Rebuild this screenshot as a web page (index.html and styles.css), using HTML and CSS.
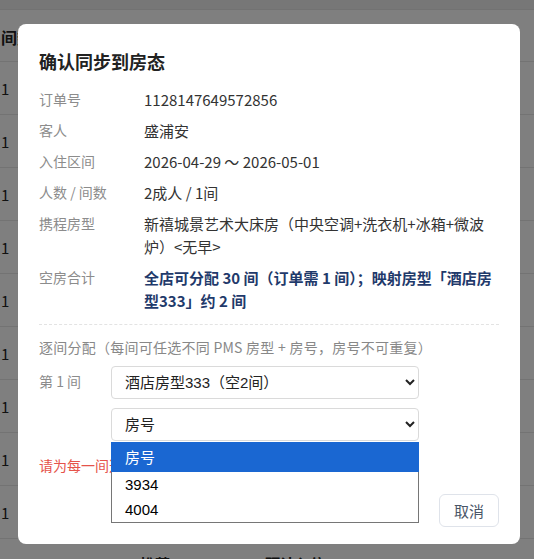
FILE: index.html
```html
<!DOCTYPE html>
<html lang="zh-CN">
<head>
<meta charset="utf-8">
<title>确认同步到房态</title>
<link rel="stylesheet" href="styles.css">
</head>
<body>
<div class="page">
  <div class="topbar"></div>
  <div class="table">
    <div class="trow thead"><span class="cell">间数</span></div>
    <div class="trow"><span class="cell">1</span></div>
    <div class="trow"><span class="cell">1</span></div>
    <div class="trow"><span class="cell">1</span></div>
    <div class="trow"><span class="cell">1</span></div>
    <div class="trow"><span class="cell">1</span></div>
    <div class="trow"><span class="cell">1</span></div>
    <div class="trow"><span class="cell">1</span></div>
    <div class="trow"><span class="cell">1</span></div>
    <div class="trow"><span class="cell">1</span></div>
    <div class="trow tfoot"><span class="cell c2">推荐</span><span class="cell c3">预计入住</span></div>
  </div>
</div>

<div class="overlay">
  <div class="modal">
    <h2 class="title">确认同步到房态</h2>
    <div class="info">
      <div class="label">订单号</div><div class="value">1128147649572856</div>
      <div class="label">客人</div><div class="value">盛浦安</div>
      <div class="label">入住区间</div><div class="value">2026-04-29 ～ 2026-05-01</div>
      <div class="label">人数 / 间数</div><div class="value">2成人 / 1间</div>
      <div class="label">携程房型</div><div class="value">新禧城景艺术大床房（中央空调+洗衣机+冰箱+微波炉）&lt;无早&gt;</div>
      <div class="label">空房合计</div><div class="value strong">全店可分配 30 间（订单需 1 间）；映射房型「酒店房型333」约 2 间</div>
    </div>
    <div class="divider"></div>
    <div class="hint">逐间分配（每间可任选不同 PMS 房型 + 房号，房号不可重复）</div>
    <div class="alloc">
      <div class="alloc-label">第 1 间</div>
      <div class="selects">
        <select class="sel">
          <option>酒店房型333（空2间）</option>
        </select>
        <div class="sel-wrap">
          <select class="sel">
            <option>房号</option>
            <option>3934</option>
            <option>4004</option>
          </select>
          <div class="dropdown">
            <div class="opt active">房号</div>
            <div class="opt">3934</div>
            <div class="opt">4004</div>
          </div>
        </div>
      </div>
    </div>
    <div class="error">请为每一间选择房号</div>
    <div class="footer">
      <button class="btn">取消</button>
    </div>
  </div>
</div>
</body>
</html>
```

FILE: styles.css
```css
html, body {
  margin: 0;
  padding: 0;
}
body {
  font-family: "Noto Sans CJK SC", "Noto Sans", sans-serif;
  background: #fff;
  color: #333;
  overflow: hidden;
  height: 559px;
}
.page {
  background: #fff;
}
.topbar {
  height: 9px;
  background: #eeeeee;
  border-bottom: 1px solid #e4e4e4;
}
.trow {
  height: 53px;
  border-bottom: 1px solid #e6e6e6;
  display: flex;
  align-items: center;
  padding-left: 1px;
  font-size: 15px;
  color: #222;
  box-sizing: border-box;
}
.thead {
  height: 52px;
  padding-top: 2px;
  font-weight: 700;
  font-size: 16px;
}
.tfoot {
  align-items: flex-start;
  padding-top: 14px;
  border-bottom: none;
}
.c2 { margin-left: 139px; font-weight: 700; }
.c3 { margin-left: 95px; font-weight: 700; }

.overlay {
  position: fixed;
  inset: 0;
  background: rgba(0, 0, 0, 0.5);
  display: flex;
  align-items: flex-start;
  padding: 24px 0 0 18px;
}
.modal {
  width: 502px;
  box-sizing: border-box;
  background: #fff;
  border-radius: 8px;
  padding: 24px 21px 17px;
}
.title {
  margin: 0 0 14px;
  font-size: 18px;
  line-height: 26px;
  font-weight: 700;
  color: #222;
}
.info {
  display: grid;
  grid-template-columns: 105px 1fr;
  row-gap: 8px;
}
.label {
  font-size: 14px;
  line-height: 23px;
  color: #8c8c8c;
}
.value {
  font-size: 15px;
  line-height: 23px;
  color: #333;
}
.value.strong {
  font-weight: 700;
  color: #1f3a6b;
}
.divider {
  border-top: 1px dashed #e3e3e3;
  margin: 12px 0 0;
}
.hint {
  margin-top: 12px;
  font-size: 14px;
  line-height: 20px;
  letter-spacing: 0.25px;
  color: #888;
}
.alloc {
  display: flex;
  margin-top: 9px;
}
.alloc-label {
  width: 72px;
  flex: none;
  font-size: 14px;
  line-height: 20px;
  padding-top: 5px;
  color: #8c8c8c;
}
.selects {
  display: flex;
  flex-direction: column;
  gap: 9px;
  width: 308px;
}
.sel-wrap {
  position: relative;
}
.sel {
  display: block;
  width: 308px;
  height: 33px;
  box-sizing: border-box;
  border: 1px solid #dadada;
  border-radius: 4px;
  background: #fff;
  padding: 0 6px 0 9px;
  font-family: "Liberation Sans", "Noto Sans CJK SC", sans-serif;
  font-size: 15px;
  color: #222;
}
.dropdown {
  position: absolute;
  left: 0;
  top: calc(100% + 1px);
  width: 308px;
  box-sizing: border-box;
  border: 1px solid #767676;
  border-top: none;
  background: #fff;
  font-family: "Liberation Sans", "Noto Sans CJK SC", sans-serif;
  font-size: 15px;
  color: #000;
  z-index: 2;
}
.opt {
  height: 25px;
  line-height: 25px;
  padding-left: 13px;
}
.opt.active {
  height: 30px;
  line-height: 32px;
  margin: 0 -1px;
  padding-left: 14px;
  background: #1a67d2;
  color: #fff;
}
.error {
  margin-top: 14px;
  font-size: 14px;
  line-height: 20px;
  color: #e5534b;
}
.footer {
  display: flex;
  justify-content: flex-end;
  margin-top: 19px;
}
.btn {
  width: 60px;
  height: 33px;
  border: 1px solid #dfe3ea;
  border-radius: 6px;
  background: #fff;
  font-family: "Noto Sans CJK SC", sans-serif;
  font-size: 15px;
  color: #4a5568;
  padding: 0;
}
```
